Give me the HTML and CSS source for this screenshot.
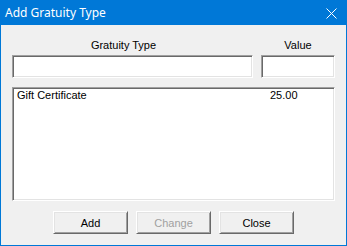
FILE: index.html
```html
<!DOCTYPE html>
<html lang="en">
<head>
  <meta charset="UTF-8" />
  <meta name="viewport" content="width=device-width, initial-scale=1" />
  <title>Add Gratuity Type</title>
  <link rel="stylesheet" href="styles.css">
</head>
<body>
  <div class="window">
    <div class="titlebar">
      <span class="title">Add Gratuity Type</span>
      <svg class="close" width="11" height="11" viewBox="0 0 11 11">
        <path d="M0.5 0.5 L10.5 10.5 M10.5 0.5 L0.5 10.5" stroke="#fff" stroke-width="1" />
      </svg>
    </div>

    <div class="content">
      <div class="fields">
        <div class="field field-type">
          <label for="type">Gratuity Type</label>
          <input id="type" type="text" class="sunken" />
        </div>
        <div class="field field-value">
          <label for="value">Value</label>
          <input id="value" type="text" class="sunken" />
        </div>
      </div>

      <ul class="list sunken">
        <li><span class="name">Gift Certificate</span><span class="amount">25.00</span></li>
      </ul>

      <div class="buttons">
        <button class="btn">Add</button>
        <button class="btn" disabled>Change</button>
        <button class="btn">Close</button>
      </div>
    </div>
  </div>
</body>
</html>
```

FILE: styles.css
```css
html,
body {
  margin: 0;
  padding: 0;
  background: #f0f0f0;
}
.window {
  width: 347px;
  height: 246px;
  box-sizing: border-box;
  border: 1px solid #0078d7;
  border-top: 0;
  background: #f0f0f0;
  font-family: "Liberation Sans", Arial, sans-serif;
  font-size: 11px;
  color: #000;
}
.titlebar {
  height: 25px;
  margin: 0 -1px;
  background: #0078d7;
  display: flex;
  align-items: center;
  justify-content: space-between;
  padding: 0 10px 0 5px;
}
.title {
  color: #fff;
  font-family: "Noto Sans", "Open Sans", sans-serif;
  font-size: 12px;
}
.close {
  display: block;
  margin-top: 2px;
}
.content {
  padding: 14px 11px 0;
}
.fields {
  display: flex;
  gap: 8px;
}
.field {
  display: flex;
  flex-direction: column;
}
.field label {
  line-height: 13px;
  text-align: center;
  margin-bottom: 3px;
}
.field-type {
  width: 242px;
}
.field-type label {
  padding-right: 18px;
}
.field-value {
  width: 74px;
}
.sunken {
  box-sizing: border-box;
  border: 1px solid;
  border-color: #a0a0a0 #fff #fff #a0a0a0;
  box-shadow: inset 1px 1px 0 #696969, inset -1px -1px 0 #e3e3e3;
  background: #fff;
}
input.sunken {
  height: 23px;
  margin: 0;
  padding: 0 3px;
  font: inherit;
  outline: none;
}
.list {
  list-style: none;
  margin: 9px 0 0;
  height: 114px;
  padding: 1px 2px;
}
.list li {
  display: flex;
  line-height: 12px;
  padding-left: 2px;
}
.name {
  width: 253px;
}
.buttons {
  display: flex;
  justify-content: center;
  gap: 8px;
  margin-top: 10px;
}
.btn {
  width: 75px;
  height: 23px;
  box-sizing: border-box;
  padding: 0;
  font: inherit;
  color: #000;
  background: #f0f0f0;
  border: 1px solid;
  border-color: #fff #696969 #696969 #fff;
  box-shadow: inset 1px 1px 0 #e3e3e3, inset -1px -1px 0 #a0a0a0;
}
.btn:disabled {
  color: #a0a0a0;
}
```
